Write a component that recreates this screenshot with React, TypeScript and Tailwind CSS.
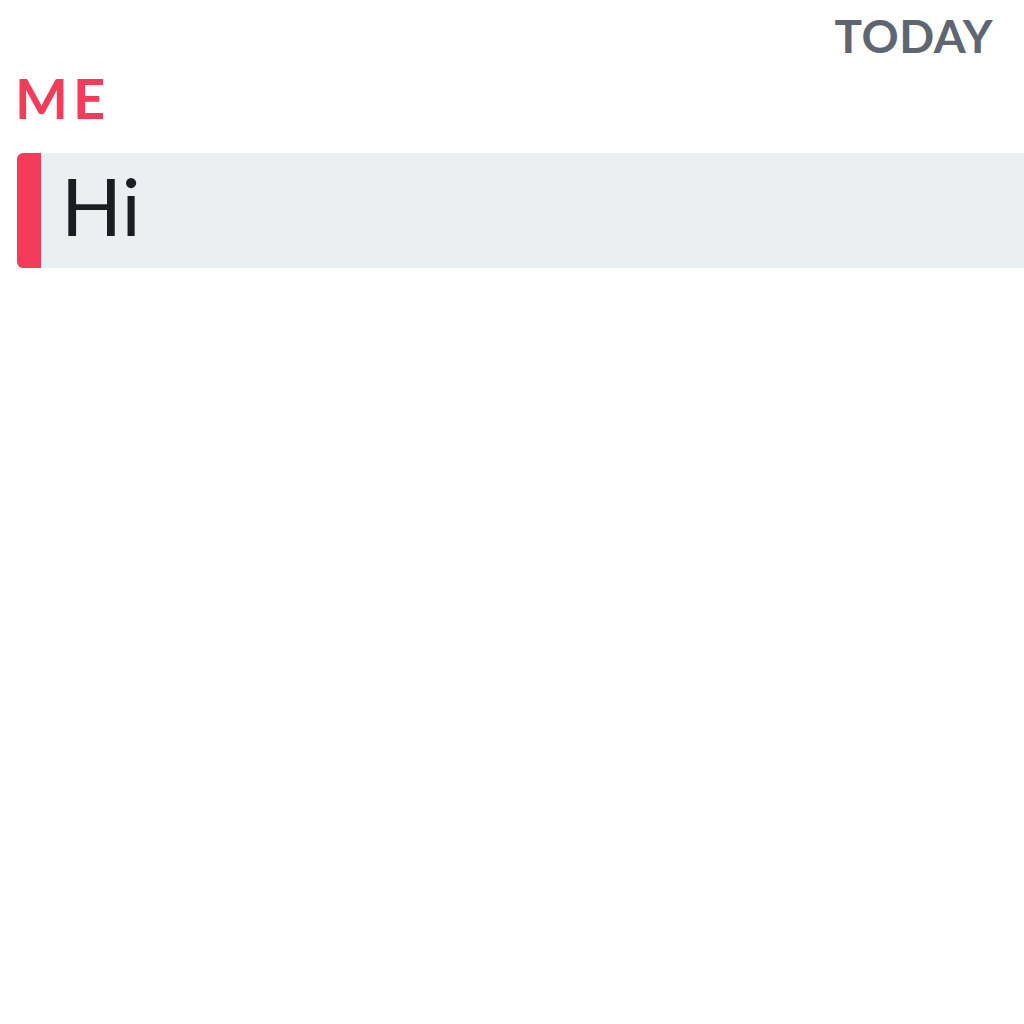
export default function App() {
  return (
    <div className="w-[1024px] h-[1024px] bg-white flex flex-col overflow-hidden" style={{ fontFamily: "Lato, 'Noto Sans', sans-serif" }}>
      <div className="flex justify-end pr-[31px] pt-[13px]">
        <span className="text-[46px] leading-[46px] font-bold text-[#5f6571] tracking-[0.5px]">TODAY</span>
      </div>
      <div className="pl-[15px] mt-[11px]">
        <span className="text-[56px] leading-[56px] font-bold text-[#f23c5a] tracking-[5px]">ME</span>
      </div>
      <div className="flex ml-[17px] mt-[27px] h-[115px]">
        <div className="w-[24px] bg-[#f23c5a] rounded-l-[6px]" />
        <div className="flex-1 bg-[#eceff2] flex items-center pl-[20px] pb-[12px]">
          <span className="text-[80px] leading-[80px] text-[#1a1d21]">Hi</span>
        </div>
      </div>
    </div>
  );
}
